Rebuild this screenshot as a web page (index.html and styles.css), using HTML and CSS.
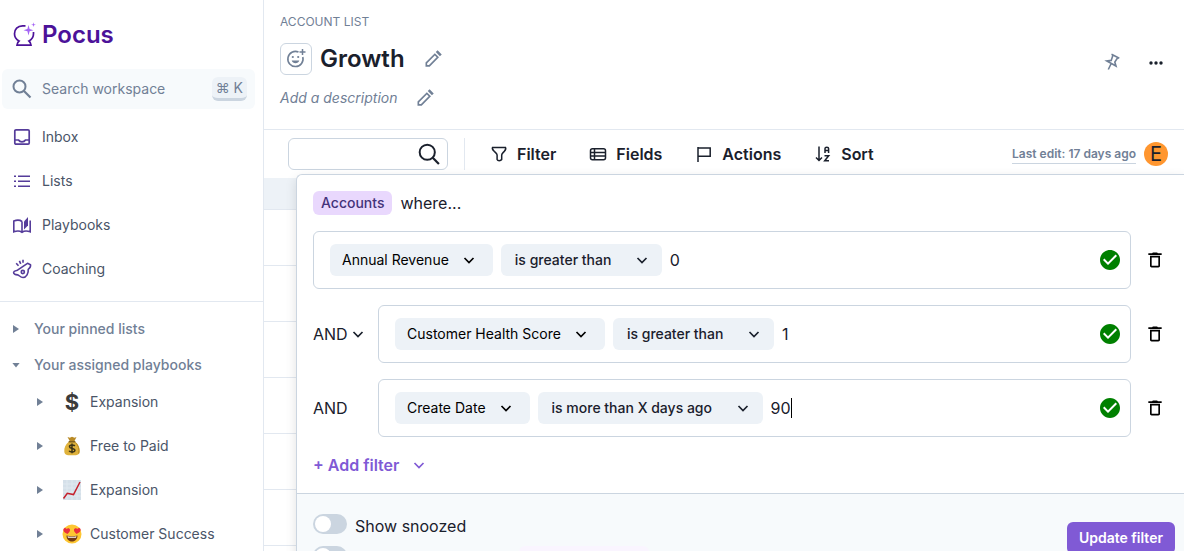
FILE: index.html
```html
<!DOCTYPE html>
<html lang="en">
<head>
  <meta charset="UTF-8" />
  <meta name="viewport" content="width=device-width, initial-scale=1.0" />
  <title>Growth - Pocus</title>
  <link rel="stylesheet" href="styles.css">
</head>
<body>
  <!-- shared icons -->
  <svg class="sprite" aria-hidden="true">
    <symbol id="chevron" viewBox="0 0 16 16"><path d="M3.500 6l4.500 4.500 4.500-4.500" fill="none" stroke="currentColor" stroke-width="1.700"/></symbol>
    <symbol id="search" viewBox="0 0 24 24"><circle cx="9.500" cy="9.500" r="6" fill="none" stroke="currentColor" stroke-width="2"/><path d="M14 14l6.500 6.500" stroke="currentColor" stroke-width="2.200"/></symbol>
    <symbol id="search-thin" viewBox="0 0 24 24"><circle cx="10.500" cy="10.500" r="6.500" fill="none" stroke="currentColor" stroke-width="1.700"/><path d="M15.200 15.200l5.300 5.300" stroke="currentColor" stroke-width="1.900"/></symbol>
    <symbol id="pencil" viewBox="0 0 24 24"><path fill="currentColor" d="M17.500 1.500l5 5-2.200 2.200-5-5zM3 16.200L14.200 5l5 5L8 21.200H3zM5 17v2.200h2.200L16.400 10 14.200 7.800z" fill-rule="evenodd"/></symbol>
    <symbol id="check" viewBox="0 0 24 24"><path fill="currentColor" d="M12 2C6.480 2 2 6.480 2 12s4.480 10 10 10 10-4.480 10-10S17.520 2 12 2zm-2 15l-5-5 1.410-1.410L10 14.170l7.590-7.590L19 8l-9 9z"/></symbol>
    <symbol id="trash" viewBox="0 0 24 24"><path fill="currentColor" d="M6 19c0 1.100.9 2 2 2h8c1.100 0 2-.9 2-2V7H6v12zM8 9h8v10H8V9zm7.500-5l-1-1h-5l-1 1H4v2h16V4z"/></symbol>
  </svg>

  <aside class="sidebar">
    <a class="logo" href="#">
      <svg width="24" height="26" viewBox="0 0 24 26" fill="none">
        <path d="M13.500 3.900H10.500C5.500 3.900 2.500 7.400 2.500 11.800c0 3.200 1.700 5.800 4.500 7.200-1.200 1-1.800 2.300-2 4.200h14c-.2-1.900-.8-3.200-2-4.200 2.800-1.400 4.500-4 4.500-7.200V10" stroke="#4c1299" stroke-width="1.700"/>
        <path d="M16.500 3l1.100 4 3.900 1.200-3.900 1.100-1.100 4.200-1.100-4.200-3.900-1.100L15.400 7zM21.500.3l.5 1.900 1.900.5-1.900.5-.5 1.900-.5-1.900-1.900-.5 1.900-.5z" fill="#a566f5"/>
      </svg>
      <span>Pocus</span>
    </a>

    <button class="search-workspace" type="button">
      <svg width="24" height="24"><use href="#search"/></svg>
      <span>Search workspace</span>
      <kbd>⌘ K</kbd>
    </button>

    <nav class="main-nav">
      <a href="#">
        <svg width="20" height="20" viewBox="0 0 20 20" fill="none" stroke="currentColor" stroke-width="1.700"><rect x="2.800" y="2.800" width="14.400" height="14.400" rx="1.200"/><path d="M3 13h3.500c.8 1.300 1.900 1.900 3.500 1.900s2.700-.6 3.500-1.900H17"/></svg>
        Inbox
      </a>
      <a href="#">
        <svg width="20" height="20" viewBox="0 0 20 20" stroke="currentColor" stroke-width="1.500"><path d="M2 5.200h2M2 10.200h2M2 15.200h2M6 5.200h12M6 10.200h12M6 15.200h12"/></svg>
        Lists
      </a>
      <a href="#">
        <svg width="20" height="20" viewBox="0 0 20 20" fill="none" stroke="currentColor" stroke-width="1.600"><path d="M10 6.500C8 5 4.500 5 1.800 6v10.800c2.700-1 6.200-1 8.200.5 2-1.500 5.500-1.500 8.200-.5V5.500M10 6.500v10.800"/><path d="M12 6.500L16 2v8.500l-4 4z" fill="currentColor" stroke="none"/></svg>
        Playbooks
      </a>
      <a href="#">
        <svg width="20" height="20" viewBox="0 0 20 20" fill="none" stroke="currentColor" stroke-width="1.600" stroke-linejoin="round"><path d="M15.500 4.300l3 1.400c.4 1.900-.6 3.400-2.300 4.600.5 3.800-1.800 8.200-5.200 8.200-2.900 0-3.600-2.400-5.400-2.600-2-.2-4.200-.7-4-2.500.2-1.600 2-1.700 3.900-2.200z"/><circle cx="10.800" cy="13" r="1.600"/><path d="M11 .8v3M7.400 1.900l1.300 3M4.200 4.200l2.300 2.600"/></svg>
        Coaching
      </a>
    </nav>

    <div class="sections">
      <button class="section" type="button"><i class="caret-right"></i>Your pinned lists</button>
      <button class="section" type="button"><i class="caret-down"></i>Your assigned playbooks</button>
      <ul class="playbooks">
        <li>
          <a href="#"><i class="caret-right"></i><b class="dollar">$</b>Expansion</a>
        </li>
        <li>
          <a href="#"><i class="caret-right"></i>
            <svg width="20" height="20" viewBox="0 0 20 20"><path d="M7 5.500C3.500 8 2 12 2.300 15.500 2.500 18.500 4 19.300 10 19.300s7.500-.8 7.700-3.800C18 12 16.500 8 13 5.500z" fill="#dfb23c"/><path d="M5.500 1l2.200 4h4.800L14.500 1l-2 .8L10 .8 7.800 1.800z" fill="#b98a25"/><path d="M6.700 5h6.600v1.500H6.700z" fill="#80601c"/><path d="M13.500 6.500c3 3 4 7 3.200 11" fill="none" stroke="#b98a25"/><path d="M12.800 10C12 8.800 7.500 8.600 7.500 10.700c0 2.200 5.400 1.200 5.400 3.500 0 2.300-5 2.200-5.800.5M10 7.500v9.800" fill="none" stroke="#3d3416" stroke-width="1.500"/></svg>Free to Paid</a>
        </li>
        <li>
          <a href="#"><i class="caret-right"></i>
            <svg width="20" height="20" viewBox="0 0 20 20"><path d="M1 0h18v20H1z" fill="#d5e0e9"/><path d="M1 4h18M1 8h18M1 12h18M1 16h18M5 0v20M10 0v20M15 0v20" stroke="#e0e9f0"/><path d="M1.500 18.500l3.800-5.200 6.200 1.300L18 2" fill="none" stroke="#c5202c" stroke-width="1.500"/></svg>Expansion</a>
        </li>
        <li>
          <a href="#"><i class="caret-right"></i>
            <svg width="20" height="20" viewBox="0 0 20 20"><circle cx="10" cy="10" r="9.500" fill="#fdc632"/><path d="M4.500 11.500c3 1 8 1 11 0 0 3.500-2.200 6-5.500 6s-5.500-2.500-5.500-6z" fill="#713a14"/><path d="M5.500 12.200c3 .7 6 .7 9 0l-.5 1.500H6z" fill="#fff"/><path d="M5.500 10C3 9 .8 7 1.500 5c.6-1.600 2.500-1.300 3.100 0 1.100-1.200 3.200-.9 3.400.8C8.200 7.500 6.800 9 5.500 10zM14.500 10c2.500-1 4.700-3 4-5-.6-1.600-2.500-1.300-3.100 0-1.100-1.200-3.200-.9-3.400.8-.2 1.700 1.200 3.200 2.500 4.200z" fill="#ea2f3d"/></svg>Customer Success</a>
        </li>
      </ul>
    </div>
  </aside>

  <main class="content">
    <header class="page-header">
      <div class="title-block">
        <div class="kicker">ACCOUNT LIST</div>
        <div class="title-row">
          <button class="emoji-btn" type="button" aria-label="Choose icon">
            <svg width="20" height="20" viewBox="0 0 20 20" fill="none" stroke="currentColor" stroke-width="1.600"><path d="M12.500 3A7.600 7.600 0 1 0 16.800 8"/><path d="M16.500 0v6M13.500 3h6" stroke-width="1.500"/><path d="M5.700 11.500h7.600c-.6 1.800-2 2.700-3.800 2.700s-3.200-.9-3.800-2.700z" fill="currentColor" stroke="none"/><circle cx="6.800" cy="8" r="1.100" fill="currentColor" stroke="none"/><circle cx="12.200" cy="8" r="1.100" fill="currentColor" stroke="none"/></svg>
          </button>
          <h1>Growth</h1>
          <button class="icon-btn" type="button" aria-label="Edit name"><svg width="20" height="20"><use href="#pencil"/></svg></button>
        </div>
        <div class="description-row">
          <em>Add a description</em>
          <button class="icon-btn" type="button" aria-label="Edit description"><svg width="20" height="20"><use href="#pencil"/></svg></button>
        </div>
      </div>
      <div class="header-actions">
        <button class="icon-btn" type="button" aria-label="Pin">
          <svg width="20" height="20" viewBox="0 0 20 20" fill="none" stroke="currentColor" stroke-width="1.600"><path d="M9.500 2.200l7.800 4M11 3L9.200 8.400l-4.400.6 9.200 5-1.200-3.900L15.800 5.500M9.200 11.500L6.300 17.500"/></svg>
        </button>
        <button class="icon-btn dark" type="button" aria-label="More">
          <svg width="20" height="20" viewBox="0 0 20 20" fill="currentColor"><circle cx="5" cy="11" r="1.700"/><circle cx="10" cy="11" r="1.700"/><circle cx="15" cy="11" r="1.700"/></svg>
        </button>
      </div>
    </header>

    <div class="toolbar">
      <div class="search-box">
        <input type="text" aria-label="Search list" />
        <svg width="28" height="28"><use href="#search-thin"/></svg>
      </div>
      <div class="tools">
        <button type="button">
          <svg width="18" height="18" viewBox="0 0 18 18" fill="none" stroke="currentColor" stroke-width="1.500"><path d="M2.500 2.500h13c.8 1.500-.2 2.800-1.300 4-1.200 1.300-2.500 2-2.500 3.500v4.500c-1 1.500-4 1.500-4.600 0V10c0-1.500-1.400-2.200-2.700-3.500-1.100-1.200-2.700-2.500-1.900-4z"/></svg>
          Filter
        </button>
        <button type="button">
          <svg width="18" height="18" viewBox="0 0 18 18" fill="none" stroke="currentColor" stroke-width="1.500"><rect x="1.500" y="3.800" width="15" height="11" rx="2"/><path d="M1.500 7.500h15M1.500 11h15M5.500 4v11"/></svg>
          Fields
        </button>
        <button type="button">
          <svg width="18" height="18" viewBox="0 0 18 18" fill="none" stroke="currentColor" stroke-width="1.500"><path d="M3 2v15M3 3h12.200v8.200H3"/></svg>
          Actions
        </button>
        <button type="button">
          <svg width="18" height="18" viewBox="0 0 18 18" fill="none" stroke="currentColor" stroke-width="1.500"><path d="M5 1.500v14M2 12.500l3 3 3-3M11 8V3.500c0-1.800 3.600-1.800 3.600 0V8M11 5.600h3.600M10.500 10.800h4.200l-4 5h4.300"/></svg>
          Sort
        </button>
      </div>
      <a class="last-edit" href="#">Last edit: 17 days ago</a>
      <span class="avatar">E</span>
    </div>

    <div class="list-area">
      <div class="grid-head"></div>
      <div class="grid-row"></div>
      <div class="grid-row"></div>
      <div class="grid-row"></div>
      <div class="grid-row"></div>
      <div class="grid-row"></div>
      <div class="grid-row"></div>

      <form class="filter-panel">
        <div class="filters">
          <div class="where"><span class="tag">Accounts</span>where...</div>

          <div class="filter-row">
            <div class="filter-box">
              <button class="chip" type="button">Annual Revenue<svg width="16" height="16"><use href="#chevron"/></svg></button>
              <div class="select">
                <select aria-label="Annual Revenue condition"><option>is greater than</option></select>
                <svg width="16" height="16"><use href="#chevron"/></svg>
              </div>
              <input class="value" type="text" value="0" aria-label="Annual Revenue value" />
              <svg class="valid" width="24" height="24"><use href="#check"/></svg>
            </div>
            <button class="delete" type="button" aria-label="Delete filter"><svg width="20" height="20"><use href="#trash"/></svg></button>
          </div>

          <div class="filter-row">
            <button class="joiner" type="button">AND<svg width="16" height="16"><use href="#chevron"/></svg></button>
            <div class="filter-box">
              <button class="chip" type="button">Customer Health Score<svg width="16" height="16"><use href="#chevron"/></svg></button>
              <div class="select">
                <select aria-label="Customer Health Score condition"><option>is greater than</option></select>
                <svg width="16" height="16"><use href="#chevron"/></svg>
              </div>
              <input class="value" type="text" value="1" aria-label="Customer Health Score value" />
              <svg class="valid" width="24" height="24"><use href="#check"/></svg>
            </div>
            <button class="delete" type="button" aria-label="Delete filter"><svg width="20" height="20"><use href="#trash"/></svg></button>
          </div>

          <div class="filter-row">
            <span class="joiner">AND</span>
            <div class="filter-box">
              <button class="chip" type="button">Create Date<svg width="16" height="16"><use href="#chevron"/></svg></button>
              <div class="select">
                <select aria-label="Create Date condition"><option>is more than X days ago</option></select>
                <svg width="16" height="16"><use href="#chevron"/></svg>
              </div>
              <input class="value editing" type="text" value="90" aria-label="Create Date value" />
              <svg class="valid" width="24" height="24"><use href="#check"/></svg>
            </div>
            <button class="delete" type="button" aria-label="Delete filter"><svg width="20" height="20"><use href="#trash"/></svg></button>
          </div>

          <button class="add-filter" type="button">+ Add filter<svg width="16" height="16"><use href="#chevron"/></svg></button>
        </div>

        <div class="panel-footer">
          <div class="toggles">
            <div class="toggle-row">
              <input class="switch" type="checkbox" id="snoozed" />
              <label for="snoozed">Show snoozed</label>
            </div>
            <div class="toggle-row">
              <input class="switch" type="checkbox" aria-label="More options" />
              <span class="hint"></span>
            </div>
          </div>
          <button class="update" type="submit">Update filter</button>
        </div>
      </form>
    </div>
  </main>
</body>
</html>
```
FILE: styles.css
```css
* { box-sizing: border-box; }
body { margin: 0; display: flex; height: 100vh; overflow: hidden; font-family: Inter, sans-serif; font-size: 16px; line-height: 24px; color: #1a202c; background: #fff; }
button, input, select { font: inherit; color: inherit; margin: 0; padding: 0; border: none; background: none; }
button { display: flex; align-items: center; cursor: pointer; white-space: nowrap; }
a { color: inherit; text-decoration: none; }
svg { flex: none; }
.sprite { display: none; }

/* sidebar */
.sidebar { flex: none; width: 264px; border-right: 1px solid #e2e8f0; font-size: 14px; color: #4a5568; overflow: hidden; }
.logo { display: flex; align-items: center; gap: 6px; height: 69px; padding-left: 12px; font-size: 24px; font-weight: 600; color: #4c1299; }
.search-workspace { width: 253px; height: 40px; margin-left: 2px; padding: 0 8px; gap: 8px; border-radius: 6px; background: #f7fafc; color: #718096; }
.search-workspace kbd { margin-left: auto; height: 24px; padding: 0 4px; border-radius: 6px; border-bottom: 3px solid #cbd5e0; background: #edf2f7; font-family: Inter, "DejaVu Sans", sans-serif; font-size: 14px; line-height: 21px; }
.main-nav { padding: 6px 12px 10px; border-bottom: 1px solid #e2e8f0; }
.main-nav a { display: flex; align-items: center; gap: 10px; height: 44px; }
.main-nav svg { color: #553c9a; }
.sections { display: flex; flex-direction: column; gap: 2px; padding-top: 10px; }
.section { height: 34px; padding-left: 12px; font-weight: 500; color: #718096; }
.caret-right, .caret-down { flex: none; width: 22px; }
.caret-right::before, .caret-down::before { content: ""; display: block; width: 6px; height: 8px; margin-left: 1px; background: #718096; clip-path: polygon(0 0, 100% 50%, 0 100%); }
.caret-down::before { width: 8px; height: 5px; margin-left: 0; clip-path: polygon(0 0, 100% 0, 50% 100%); }
.playbooks { list-style: none; margin: -2px 0 0; padding: 0; }
.playbooks li { margin-bottom: 4px; }
.playbooks a { display: flex; align-items: center; height: 40px; padding-left: 36px; }
.playbooks .caret-right { width: 26px; }
.playbooks svg, .dollar { width: 20px; margin-right: 8px; }
.dollar { font-size: 22px; text-align: center; color: #3b3b3b; }

/* page header */
.content { flex: 1; min-width: 0; display: flex; flex-direction: column; }
.page-header { display: flex; justify-content: space-between; height: 130px; padding: 12px 18px 0 16px; border-bottom: 1px solid #e2e8f0; color: #718096; }
.kicker { font-size: 12px; line-height: 20px; }
.title-row { display: flex; align-items: center; margin-top: 11px; }
.emoji-btn { width: 32px; height: 32px; justify-content: center; border: 1px solid #cbd5e0; border-radius: 6px; }
h1 { margin: 0 18px 0 8px; font-size: 24px; line-height: 32px; font-weight: 600; color: #1a202c; }
.description-row { display: flex; align-items: center; gap: 18px; margin-top: 11px; font-size: 14px; }
.header-actions { display: flex; align-items: center; gap: 24px; height: 100px; }
.dark { color: #1a202c; }

/* toolbar */
.toolbar { flex: none; display: flex; align-items: center; height: 48px; padding: 0 16px 0 24px; }
.search-box { display: flex; align-items: center; width: 160px; height: 32px; padding-right: 4px; border: 1px solid #cbd5e0; border-radius: 6px; }
.search-box input { flex: 1; min-width: 0; height: 100%; padding-left: 12px; outline: none; }
.tools { display: flex; gap: 33px; height: 32px; margin-left: 16px; padding-left: 25px; border-left: 1px solid #e2e8f0; }
.tools button { gap: 9px; font-weight: 600; }
.last-edit { margin-left: auto; margin-right: 8px; border-bottom: 1px solid #cbd5e0; font-size: 12px; line-height: 18px; font-weight: 600; color: #718096; white-space: nowrap; }
.avatar { width: 24px; height: 24px; border-radius: 50%; background: #ff962f; font-size: 20px; text-align: center; }

/* list behind the panel */
.list-area { position: relative; flex: 1; min-height: 0; }
.grid-head { height: 32px; background: #edf2f7; border-bottom: 1px solid #e2e8f0; }
.grid-row { height: 56px; border-bottom: 1px solid #e2e8f0; }

/* filter panel */
.filter-panel { position: absolute; top: -4px; left: 32px; right: 0; border: 1px solid #cbd5e0; border-right: none; border-radius: 6px 0 0 0; background: #fff; box-shadow: 0 4px 12px rgba(0,0,0,0.12); }
.filters { display: flex; flex-direction: column; align-items: flex-start; gap: 16px; padding: 16px 19px 16px 16px; }
.where { display: flex; align-items: center; gap: 8px; }
.tag { padding: 0 8px; border-radius: 6px; background: #e9d8fd; font-size: 14px; font-weight: 500; color: #44337a; }
.filter-row { display: flex; align-items: center; width: 100%; }
.filter-box { flex: 1; display: flex; align-items: center; gap: 8px; padding: 12px 8px 12px 16px; border: 1px solid #cbd5e0; border-radius: 6px; }
.joiner { flex: none; display: flex; align-items: center; gap: 2px; width: 65px; }
.chip { height: 32px; padding: 0 16px 0 12px; gap: 12px; border-radius: 6px; background: #edf2f7; font-size: 14px; color: #000; }
.select { display: grid; align-items: center; border-radius: 6px; background: #edf2f7; }
.select select, .select svg { grid-area: 1 / 1; }
.select select { appearance: none; height: 32px; padding: 0 50px 0 14px; font-size: 14px; font-weight: 500; }
.select svg { justify-self: end; margin-right: 12px; pointer-events: none; }
.value { field-sizing: content; height: 20px; line-height: 20px; outline: none; }
.editing { border-right: 1px solid #000; }
.valid { margin-left: auto; color: #008000; }
.delete { margin-left: 14px; color: #000; }
.add-filter { gap: 12px; font-weight: 600; color: #805ad5; }
.panel-footer { display: flex; justify-content: space-between; align-items: flex-start; padding: 20px 9px 20px 16px; border-top: 1px solid #cbd5e0; background: #f7fafc; }
.toggles { display: flex; flex-direction: column; gap: 8px; }
.toggle-row { display: flex; align-items: flex-start; gap: 8px; }
.switch { appearance: none; width: 34px; height: 20px; padding: 2px; border-radius: 10px; background: #cbd5e0; }
.switch::before { content: ""; display: block; width: 16px; height: 16px; border-radius: 50%; background: #fff; }
.switch:checked { background: #805ad5; }
.switch:checked::before { margin-left: 14px; }
.hint { width: 130px; height: 24px; margin-left: 164px; border-radius: 6px; background: #faf5ff; }
.update { height: 32px; margin-top: 8px; padding: 0 12px; border-radius: 6px; background: #805ad5; font-size: 14px; font-weight: 600; color: #fff; }
```
